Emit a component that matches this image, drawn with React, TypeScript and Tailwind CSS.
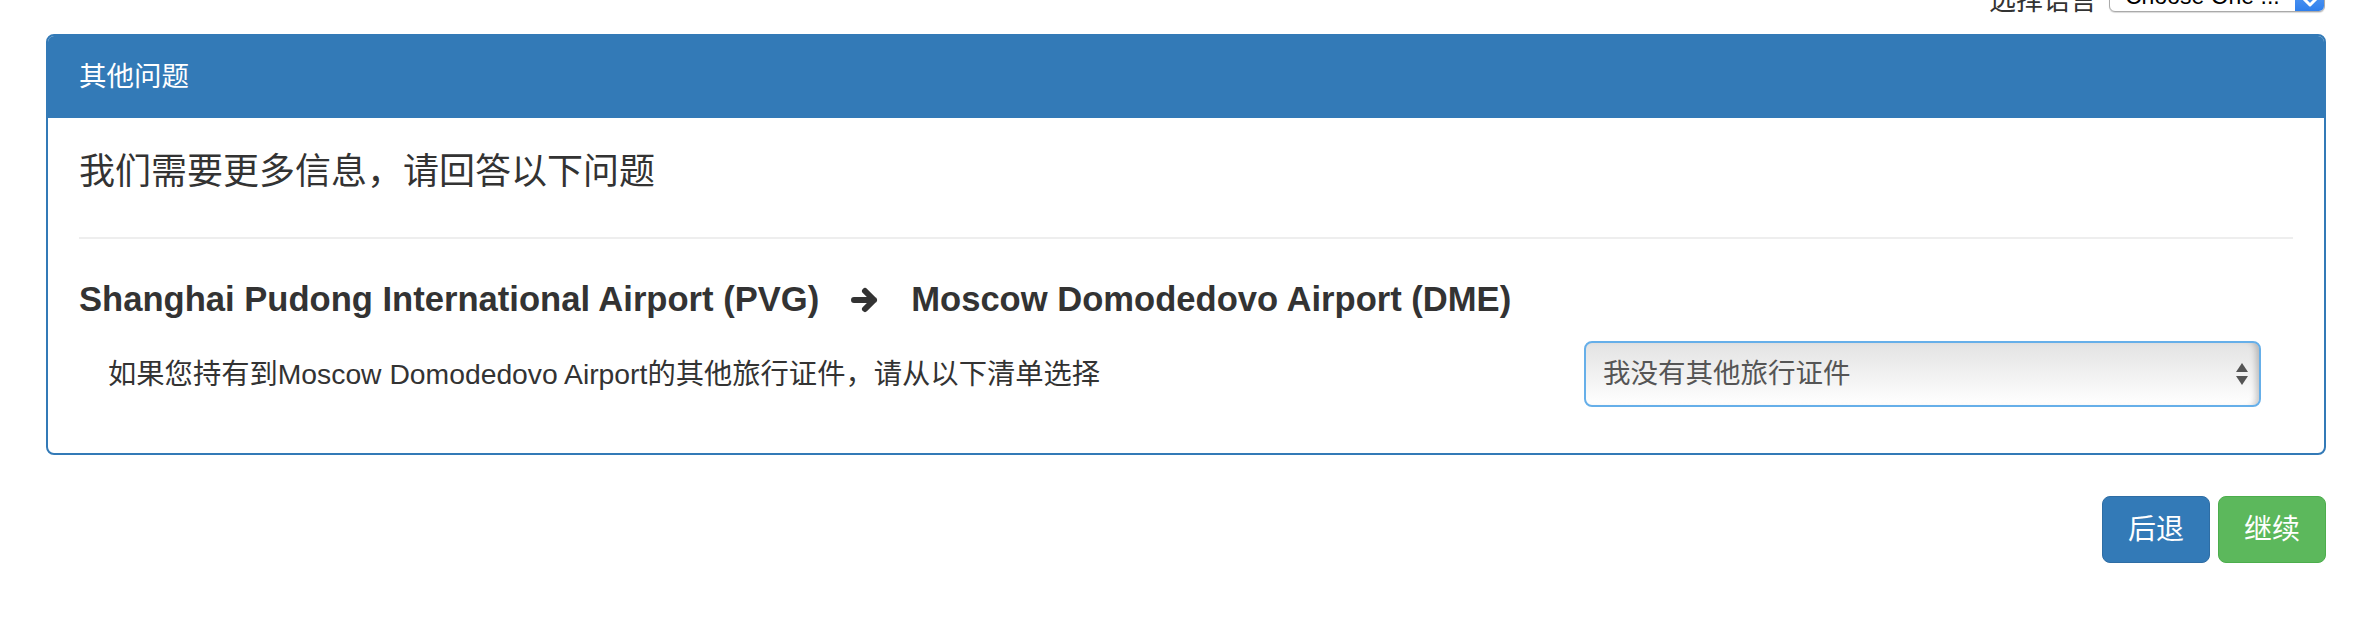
const font = { fontFamily: '"Liberation Sans", "Noto Sans CJK SC", sans-serif' };

const ArrowRight = () => (
  <svg width="30" height="28" viewBox="0 0 30 28" fill="none">
    <path d="M4 14H24M15 5L24 14L15 23" stroke="#333" strokeWidth="6" strokeLinecap="round" strokeLinejoin="round" />
  </svg>
);

const UpDown = () => (
  <svg width="14" height="24" viewBox="0 0 14 24">
    <path d="M7 1L13 10H1Z" fill="#555" />
    <path d="M7 23L13 14H1Z" fill="#555" />
  </svg>
);

const LanguagePicker = () => (
  <div className="flex justify-end items-end gap-[12px] h-[34px] -mt-[22px] pr-[1px]">
    <span className="text-[27px] leading-none text-[#333] mb-[-3px] whitespace-nowrap">选择语言</span>
    <div className="flex h-full w-[216px] rounded-[6px] border border-[#aaa] bg-white overflow-hidden shadow-[0_1px_1px_rgba(0,0,0,0.15)]">
      <div className="flex-1 flex items-end pl-[15px] pb-[3px] text-[23px] leading-none text-black whitespace-nowrap overflow-hidden">Choose One ...</div>
      <div className="w-[29px] shrink-0 flex items-end justify-center pb-[4px] bg-gradient-to-b from-[#6aa9f7] to-[#2f7fec]">
        <svg width="16" height="10" viewBox="0 0 16 10" fill="none">
          <path d="M2 2L8 8L14 2" stroke="white" strokeWidth="3" strokeLinecap="round" strokeLinejoin="round" />
        </svg>
      </div>
    </div>
  </div>
);

export default function App() {
  return (
    <div className="min-h-[640px] bg-white pl-[46px] pr-[36px] text-[#333]" style={font}>
      <LanguagePicker />

      <div className="mt-[22px] rounded-[8px] border-2 border-[#337ab7] overflow-hidden">
        <div className="h-[82px] bg-[#337ab7] flex items-center px-[31px]">
          <h3 className="text-[27.5px] text-white">其他问题</h3>
        </div>

        <div className="px-[31px] pt-[32px] pb-[46px]">
          <h2 className="text-[36px] leading-[44px] text-[#333]">我们需要更多信息，请回答以下问题</h2>
          <div className="mt-[43px] h-[2px] bg-[#eee]" />

          <div className="mt-[41px] flex items-center gap-[31px] h-[40px]">
            <span className="text-[34.6px] font-bold">Shanghai Pudong International Airport (PVG)</span>
            <ArrowRight />
            <span className="text-[34.6px] font-bold">Moscow Domodedovo Airport (DME)</span>
          </div>

          <div className="mt-[21px] flex items-center pl-[29px] pr-[32px]">
            <label className="flex-1 text-[28.3px]">如果您持有到Moscow Domodedovo Airport的其他旅行证件，请从以下清单选择</label>
            <div className="w-[677px] h-[66px] rounded-[8px] border-2 border-[#66afe9] bg-gradient-to-b from-[#e3e3e3] to-white shadow-[inset_-7px_0_6px_-4px_rgba(0,0,0,0.22)] flex items-center justify-between pl-[17px] pr-[10px]">
              <span className="text-[27.5px] text-[#555]">我没有其他旅行证件</span>
              <UpDown />
            </div>
          </div>
        </div>
      </div>

      <div className="mt-[41px] flex justify-end gap-[8px]">
        <button className="w-[108px] h-[67px] rounded-[8px] border border-[#2e6da4] bg-[#337ab7] text-white text-[28px]">后退</button>
        <button className="w-[108px] h-[67px] rounded-[8px] border border-[#4cae4c] bg-[#5cb85c] text-white text-[28px]">继续</button>
      </div>
    </div>
  );
}
